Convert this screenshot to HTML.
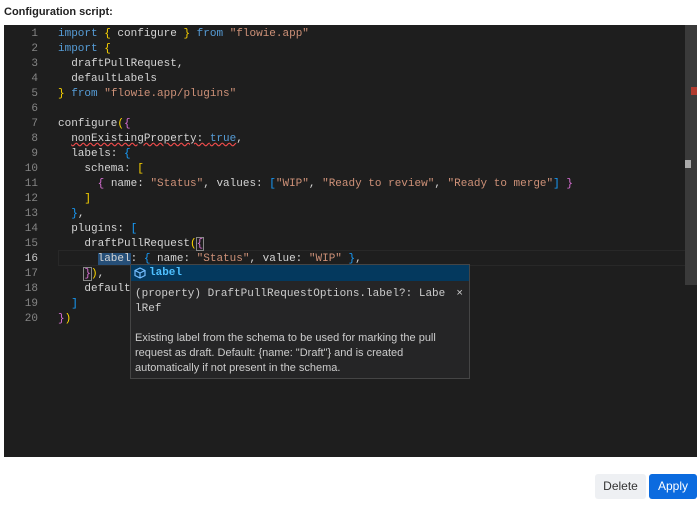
<!DOCTYPE html>
<html><head><style>
body{margin:0;width:700px;height:510px;background:#fff;font-family:"Liberation Sans",sans-serif;position:relative;overflow:hidden}
.title{position:absolute;left:4px;top:6px;font-size:11px;font-weight:bold;color:#222}
.ed{position:absolute;left:4px;top:25px;width:693px;height:432px;background:#1e1e1e}
.ln{position:absolute;left:0;width:34px;text-align:right;color:#858585;font:11px/15px "Liberation Mono",monospace}
.code{position:absolute;left:54px;white-space:pre;color:#d4d4d4;font:11px/15px "Liberation Mono",monospace}
.k{color:#569cd6}.s{color:#ce9178}.y{color:#ffd700}.p{color:#da70d6}.b{color:#179fff}
.cur{position:absolute;left:54px;top:225px;width:627px;height:14px;border:1px solid #282828}
.sb{position:absolute;left:681px;top:0;width:12px;height:260px;background:#3a3a3a}
.pop{position:absolute;left:130px;top:264px;width:338px;height:113px;background:#252526;border:1px solid #454545;font-size:11px;color:#ccc}
.ph{height:16px;background:#04395e;color:#4fc1ff;font:bold 11px/16px "Liberation Mono",monospace;padding-left:18px;position:relative}
.btn{position:absolute;top:474px;height:25px;border-radius:3px;font-size:12px;line-height:25px;text-align:center}
</style></head><body>
<div class="title">Configuration script:</div>
<div class="ed">
<div class="cur"></div>
<div class="ln" style="top:2px">1<br>2<br>3<br>4<br>5<br>6<br>7<br>8<br>9<br>10<br>11<br>12<br>13<br>14<br>15<br><span style="color:#c6c6c6">16</span><br>17<br>18<br>19<br>20</div>
<div class="code" style="top:2px"><span class="k">import</span> <span class="y">{</span> configure <span class="y">}</span> <span class="k">from</span> <span class="s">"flowie.app"</span>
<span class="k">import</span> <span class="y">{</span>
  draftPullRequest,
  defaultLabels
<span class="y">}</span> <span class="k">from</span> <span class="s">"flowie.app/plugins"</span>

configure<span class="y">(</span><span class="p">{</span>
  <span style="text-decoration:underline wavy #f14c4c">nonExistingProperty: <span class="k">true</span></span>,
  labels: <span class="b">{</span>
    schema: <span class="y">[</span>
      <span class="p">{</span> name: <span class="s">"Status"</span>, values: <span class="b">[</span><span class="s">"WIP"</span>, <span class="s">"Ready to review"</span>, <span class="s">"Ready to merge"</span><span class="b">]</span> <span class="p">}</span>
    <span class="y">]</span>
  <span class="b">}</span>,
  plugins: <span class="b">[</span>
    draftPullRequest<span class="y">(</span><span class="p" style="outline:1px solid #888">{</span>
      <span style="background:#264f78">label</span>: <span class="b">{</span> name: <span class="s">"Status"</span>, value: <span class="s">"WIP"</span> <span class="b">}</span>,
    <span class="p" style="outline:1px solid #888">}</span><span class="y">)</span>,
    defaultLabels
  <span class="b">]</span>
<span class="p">}</span><span class="y">)</span></div>
<div class="sb"><div style="position:absolute;left:6px;top:62px;width:6px;height:8px;background:#b03a2e"></div><div style="position:absolute;left:0;top:135px;width:6px;height:8px;background:#aaa"></div></div>
</div>
<div class="pop">
<div class="ph"><svg width="12" height="12" viewBox="0 0 12 12" style="position:absolute;left:3px;top:2px"><path d="M6 1L11 3.5V8.5L6 11L1 8.5V3.5Z M1 3.5L6 6L11 3.5 M6 6V11" fill="none" stroke="#75beff" stroke-width="1.2"/></svg>label</div>
<div style="font:11px/15px 'Liberation Mono',monospace;padding:6px 4px 0 4px;color:#ccc;position:relative">(property) DraftPullRequestOptions.label?: Labe<br>lRef<span style="position:absolute;right:6px;top:6px">×</span></div>
<div style="padding:14px 4px 0 4px;line-height:15px;font-size:11px">Existing label from the schema to be used for marking the pull request as draft. Default: {name: "Draft"} and is created automatically if not present in the schema.</div>
</div>
<div class="btn" style="left:595px;width:51px;background:#eef0f3;color:#333">Delete</div>
<div class="btn" style="left:649px;width:48px;background:#0b6bdf;color:#fff">Apply</div>
</body></html>
